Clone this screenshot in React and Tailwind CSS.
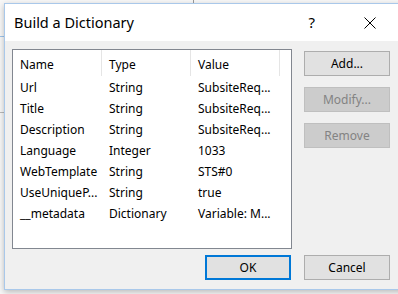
import React from "react";

const rows = [
  { name: "Url", type: "String", value: "SubsiteReq..." },
  { name: "Title", type: "String", value: "SubsiteReq..." },
  { name: "Description", type: "String", value: "SubsiteReq..." },
  { name: "Language", type: "Integer", value: "1033" },
  { name: "WebTemplate", type: "String", value: "STS#0" },
  { name: "UseUniqueP...", type: "String", value: "true" },
  { name: "__metadata", type: "Dictionary", value: "Variable: M..." },
];

const font = { fontFamily: '"Segoe UI", "Noto Sans", "Open Sans", sans-serif' };

const App = () => {
  return (
    <div
      className="w-[398px] h-[294px] overflow-hidden bg-[#f7f7f7] relative"
      style={font}
    >
      {/* windows behind */}
      <div className="absolute left-0 top-[36px] w-[4px] h-px bg-[#9cc3ea]" />
      <div className="absolute left-0 top-[112px] w-[4px] h-px bg-[#b9b9b9]" />
      <div className="absolute left-[193px] top-0 w-px h-[3px] bg-[#9a9a9a]" />

      <div className="absolute left-[4px] top-[3px] w-[410px] h-[287px] border border-[#a9c8ea] bg-[#f0f0f0] shadow-[0_2px_6px_rgba(0,0,0,0.25)] flex flex-col">
        <div className="h-[37px] bg-white flex items-center shrink-0">
          <span className="ml-[9px] text-[14.5px] text-black">Build a Dictionary</span>
          <span className="ml-auto mr-[49px] text-[15px] text-black">?</span>
          <svg width="12" height="12" viewBox="0 0 12 12" className="mr-[37px]">
            <path d="M0.5 0.5 L11.5 11.5 M11.5 0.5 L0.5 11.5" stroke="#000" strokeWidth="1" />
          </svg>
        </div>

        <div className="flex-1 flex flex-col pl-[7px] pt-[8px]">
          <div className="flex">
            <div className="w-[280px] h-[200px] border border-[#828790] bg-white text-[12px] text-black">
              <div className="flex h-[26px] items-center">
                <div className="w-[89px] h-full flex items-center pl-[7px] pt-[3px] border-r border-[#e5e5e5]">Name</div>
                <div className="w-[89px] h-full flex items-center pl-[7px] pt-[3px] border-r border-[#e5e5e5]">Type</div>
                <div className="w-[89px] h-full flex items-center pl-[7px] pt-[3px] border-r border-[#e5e5e5]">Value</div>
              </div>
              <div className="pt-px">
                {rows.map((r) => (
                  <div key={r.name} className="flex h-[21px] items-center">
                    <div className="w-[89px] pl-[7px] whitespace-nowrap">{r.name}</div>
                    <div className="w-[89px] pl-[7px] whitespace-nowrap">{r.type}</div>
                    <div className="w-[89px] pl-[7px] whitespace-nowrap">{r.value}</div>
                  </div>
                ))}
              </div>
            </div>

            <div className="ml-[12px] pt-[2px] flex flex-col gap-[11px] text-[12px]">
              <button className="w-[86px] h-[25px] border border-[#adadad] bg-[#e1e1e1] text-black">
                Add...
              </button>
              <button className="w-[86px] h-[25px] border border-[#bfbfbf] bg-[#cccccc] text-[#838383]">
                Modify...
              </button>
              <button className="w-[86px] h-[25px] border border-[#bfbfbf] bg-[#cccccc] text-[#838383]">
                Remove
              </button>
            </div>
          </div>

          <div className="flex mt-[6px] text-[12px]">
            <button className="ml-[193px] w-[86px] h-[25px] border-2 border-[#0078d7] bg-[#e1e1e1] text-black">
              OK
            </button>
            <button className="ml-[13px] w-[86px] h-[25px] border border-[#adadad] bg-[#e1e1e1] text-black">
              Cancel
            </button>
          </div>
        </div>
      </div>
    </div>
  );
};

export default App;
